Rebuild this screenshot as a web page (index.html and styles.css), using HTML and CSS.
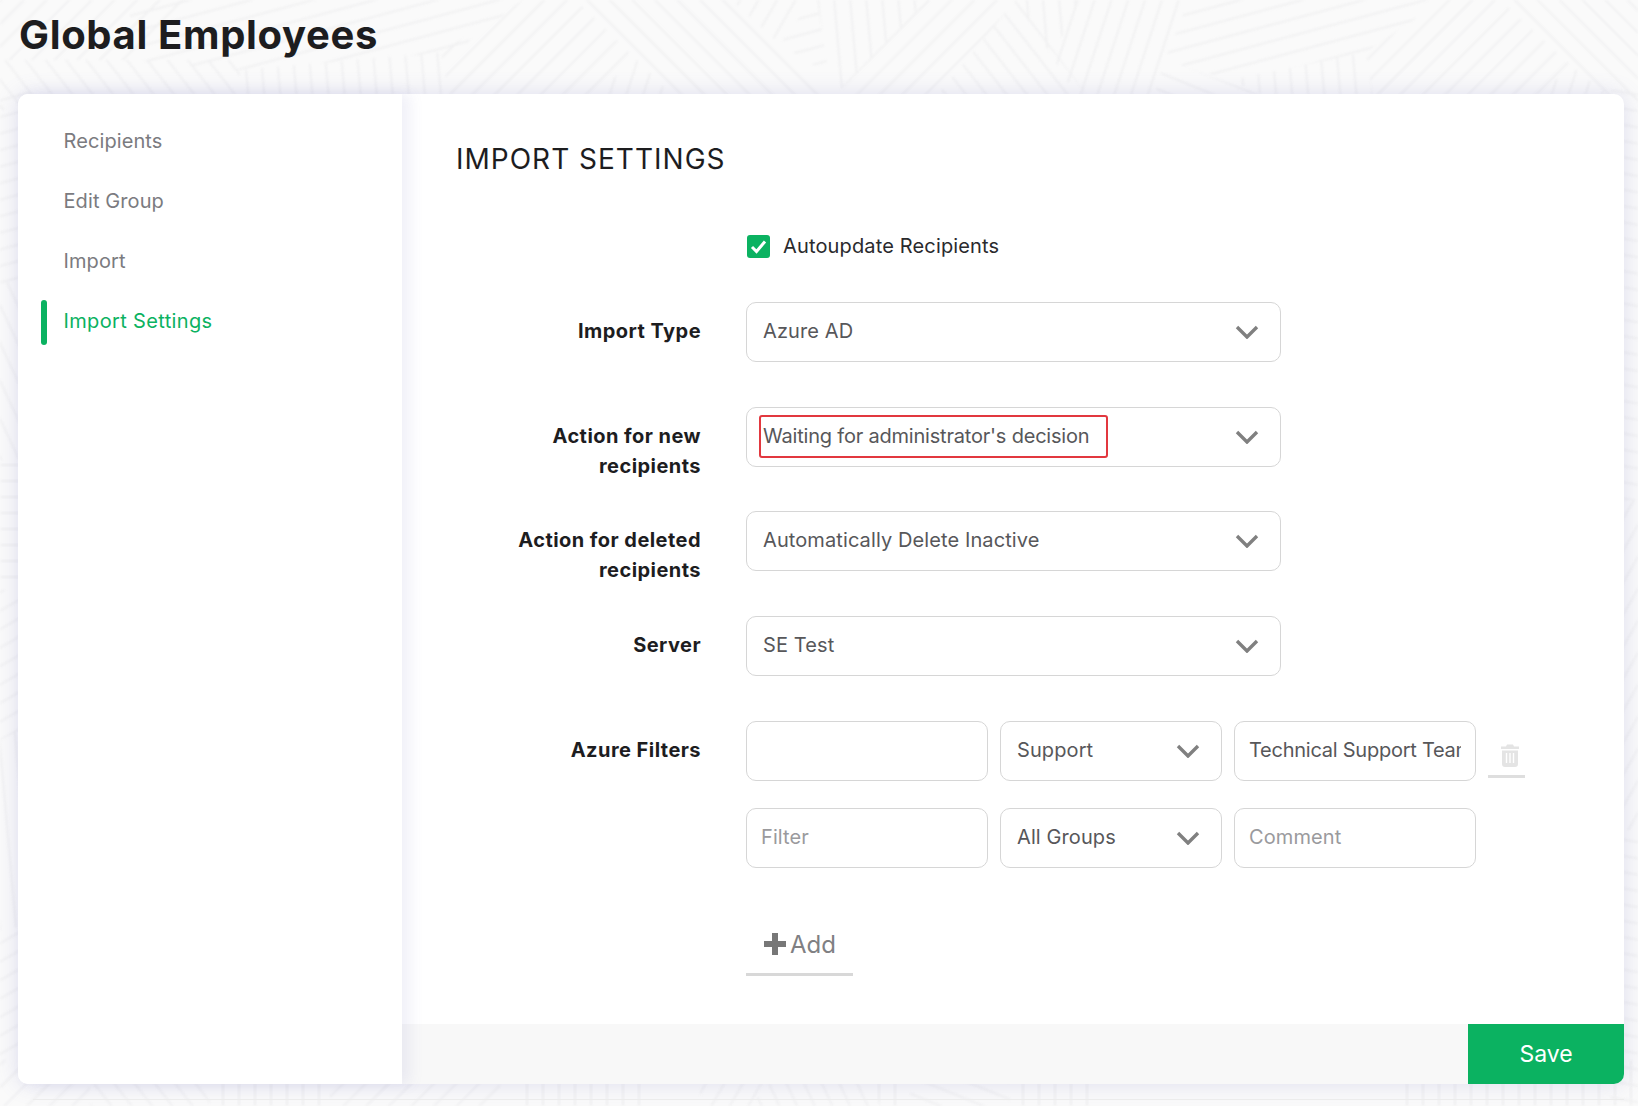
FILE: index.html
```html
<!DOCTYPE html>
<html lang="en">
<head>
<meta charset="utf-8">
<title>Global Employees</title>
<link rel="stylesheet" href="styles.css">
</head>
<body>
<svg class="backdrop" width="1638" height="1106" viewBox="0 0 1638 1106" aria-hidden="true">
  <defs>
    <pattern id="a0" width="16" height="16" patternUnits="userSpaceOnUse"><rect width="16" height="2" fill="#eeeeef"/></pattern>
    <pattern id="r15" width="16" height="16" patternUnits="userSpaceOnUse" patternTransform="rotate(-15)"><rect width="16" height="2" fill="#eeeeef"/></pattern>
    <pattern id="r30" width="16" height="16" patternUnits="userSpaceOnUse" patternTransform="rotate(-30)"><rect width="16" height="2" fill="#eeeeef"/></pattern>
    <pattern id="r45" width="16" height="16" patternUnits="userSpaceOnUse" patternTransform="rotate(-45)"><rect width="16" height="2" fill="#eeeeef"/></pattern>
    <pattern id="r60" width="16" height="16" patternUnits="userSpaceOnUse" patternTransform="rotate(-60)"><rect width="16" height="2" fill="#eeeeef"/></pattern>
    <pattern id="r72" width="16" height="16" patternUnits="userSpaceOnUse" patternTransform="rotate(-72)"><rect width="16" height="2" fill="#eeeeef"/></pattern>
    <pattern id="v85" width="16" height="16" patternUnits="userSpaceOnUse" patternTransform="rotate(85)"><rect width="16" height="2" fill="#eeeeef"/></pattern>
    <pattern id="v90" width="16" height="16" patternUnits="userSpaceOnUse" patternTransform="rotate(90)"><rect width="16" height="2" fill="#eeeeef"/></pattern>
    <pattern id="f10" width="16" height="16" patternUnits="userSpaceOnUse" patternTransform="rotate(10)"><rect width="16" height="2" fill="#eeeeef"/></pattern>
    <pattern id="f22" width="16" height="16" patternUnits="userSpaceOnUse" patternTransform="rotate(22)"><rect width="16" height="2" fill="#eeeeef"/></pattern>
    <pattern id="f45" width="16" height="16" patternUnits="userSpaceOnUse" patternTransform="rotate(45)"><rect width="16" height="2" fill="#eeeeef"/></pattern>
    <pattern id="f52" width="16" height="16" patternUnits="userSpaceOnUse" patternTransform="rotate(52)"><rect width="16" height="2" fill="#eeeeef"/></pattern>
    <pattern id="f65" width="16" height="16" patternUnits="userSpaceOnUse" patternTransform="rotate(65)"><rect width="16" height="2" fill="#eeeeef"/></pattern>
  </defs>
  <polygon fill="url(#r45)" points="0,0 200,0 130,60 0,60"/>
  <polygon fill="url(#f52)" points="0,60 130,60 240,60 240,110 0,110"/>
  <polygon fill="url(#r15)" points="130,0 523,0 455,52 240,70 130,60"/>
  <polygon fill="url(#v85)" points="240,70 441,52 452,110 240,110"/>
  <polygon fill="url(#r45)" points="441,52 523,0 576,0 635,58 580,110 452,110"/>
  <polygon fill="url(#f45)" points="576,0 731,0 841,110 687,110 635,58"/>
  <polygon fill="url(#r72)" points="635,58 687,110 580,110"/>
  <polygon fill="url(#r60)" points="731,0 812,0 780,44"/>
  <polygon fill="url(#r15)" points="812,0 817,0 829,75 780,44"/>
  <polygon fill="url(#v85)" points="817,0 927,0 841,88 829,75"/>
  <polygon fill="url(#r45)" points="927,0 1016,0 925,110 841,110 841,88"/>
  <polygon fill="url(#f52)" points="1016,0 1088,96 1085,110 925,110"/>
  <polygon fill="url(#v85)" points="1016,0 1077,0 1053,58"/>
  <polygon fill="url(#r72)" points="1077,0 1189,0 1150,110 1085,110 1053,58"/>
  <polygon fill="url(#r15)" points="1189,0 1443,0 1366,52 1230,80 1165,60"/>
  <polygon fill="url(#f22)" points="1165,60 1265,96 1265,110 1150,110"/>
  <polygon fill="url(#v85)" points="1230,80 1366,52 1375,110 1265,110 1265,96"/>
  <polygon fill="url(#r45)" points="1443,0 1500,0 1572,66 1520,110 1375,110 1366,52"/>
  <polygon fill="url(#f45)" points="1500,0 1638,0 1638,110 1625,110 1572,66"/>
  <polygon fill="url(#r72)" points="1572,66 1625,110 1520,110"/>

  <polygon fill="url(#r15)" points="0,90 30,90 30,275 0,285"/>
  <polygon fill="url(#f65)" points="0,285 30,275 30,460 0,460"/>
  <polygon fill="url(#a0)" points="0,460 30,460 30,590 0,590"/>
  <polygon fill="url(#r30)" points="0,590 30,590 30,725 0,740"/>
  <polygon fill="url(#v85)" points="0,740 30,725 30,925 0,930"/>
  <polygon fill="url(#r30)" points="0,930 30,925 30,1055 0,1060"/>

  <polygon fill="url(#f10)" points="1610,90 1638,90 1638,500 1610,500"/>
  <polygon fill="url(#r60)" points="1610,500 1638,500 1638,830 1610,830"/>
  <polygon fill="url(#f10)" points="1610,830 1638,830 1638,1106 1610,1106"/>

  <polygon fill="url(#r45)" points="0,1060 90,1060 90,1106 0,1106"/>
  <polygon fill="url(#f52)" points="90,1060 210,1060 210,1106 90,1106"/>
  <polygon fill="url(#v90)" points="210,1060 330,1060 330,1106 210,1106"/>
  <polygon fill="url(#r45)" points="330,1060 500,1060 500,1106 330,1106"/>
  <polygon fill="url(#v90)" points="520,1060 640,1060 640,1106 520,1106"/>
  <polygon fill="url(#r60)" points="700,1060 790,1060 750,1106 700,1106"/>
  <polygon fill="url(#f65)" points="790,1060 860,1060 880,1106 750,1106"/>
  <polygon fill="url(#v90)" points="860,1060 910,1060 910,1106 880,1106"/>
  <polygon fill="url(#f22)" points="910,1060 1010,1060 1010,1106 910,1106"/>
  <polygon fill="url(#v90)" points="1010,1060 1090,1060 1090,1106 1010,1106"/>
  <polygon fill="url(#v90)" points="1400,1060 1638,1060 1638,1106 1400,1106"/>
</svg>

<div class="page">
  <header class="page-head">
    <h1 class="page-title">Global Employees</h1>
  </header>

  <div class="card">
    <nav class="side">
      <a class="side-link">Recipients</a>
      <a class="side-link">Edit Group</a>
      <a class="side-link">Import</a>
      <a class="side-link side-link-active">Import Settings</a>
    </nav>

    <main class="main">
      <div class="content">
        <h2 class="section-title">IMPORT SETTINGS</h2>

        <div class="check-row">
          <span class="check">
            <svg width="23" height="23" viewBox="0 0 23 23"><path d="M5 12l4.500 4.500 8.500-10" fill="none" stroke="#fff" stroke-width="3"/></svg>
          </span>
          <span class="check-label">Autoupdate Recipients</span>
        </div>

        <div class="row">
          <div class="row-label">Import Type</div>
          <div class="select select-wide"><span>Azure AD</span>
            <svg class="chev" width="24" height="14" viewBox="0 0 24 14"><path d="M2 2l10 10 10-10" fill="none" stroke="#808080" stroke-width="3.400"/></svg>
          </div>
        </div>

        <div class="row">
          <div class="row-label">Action for new recipients</div>
          <div class="select select-wide select-tight"><span>Waiting for administrator's decision</span>
            <span class="highlight"></span>
            <svg class="chev" width="24" height="14" viewBox="0 0 24 14"><path d="M2 2l10 10 10-10" fill="none" stroke="#808080" stroke-width="3.400"/></svg>
          </div>
        </div>

        <div class="row">
          <div class="row-label">Action for deleted recipients</div>
          <div class="select select-wide"><span>Automatically Delete Inactive</span>
            <svg class="chev" width="24" height="14" viewBox="0 0 24 14"><path d="M2 2l10 10 10-10" fill="none" stroke="#808080" stroke-width="3.400"/></svg>
          </div>
        </div>

        <div class="row">
          <div class="row-label">Server</div>
          <div class="select select-wide"><span>SE Test</span>
            <svg class="chev" width="24" height="14" viewBox="0 0 24 14"><path d="M2 2l10 10 10-10" fill="none" stroke="#808080" stroke-width="3.400"/></svg>
          </div>
        </div>

        <div class="row row-filters">
          <div class="row-label">Azure Filters</div>
          <div class="filters">
            <div class="filter-line">
              <input class="field" type="text" value="">
              <div class="select select-mid"><span>Support</span>
                <svg class="chev" width="24" height="14" viewBox="0 0 24 14"><path d="M2 2l10 10 10-10" fill="none" stroke="#808080" stroke-width="3.400"/></svg>
              </div>
              <input class="field field-tight" type="text" value="Technical Support Team">
              <button class="trash" type="button" aria-label="Delete">
                <svg width="18" height="24" viewBox="0 0 18 24"><path d="M6 1.500h6l1 2h5v2.500H0V3.500h5zM1 7.500h16v13.500a3 3 0 0 1-3 3H4a3 3 0 0 1-3-3z" fill="#e4e4e4"/><path d="M5.500 10v10M9 10v10M12.500 10v10" stroke="#fff" stroke-width="1.400"/></svg>
              </button>
            </div>
            <div class="filter-line">
              <input class="field" type="text" placeholder="Filter">
              <div class="select select-mid"><span>All Groups</span>
                <svg class="chev" width="24" height="14" viewBox="0 0 24 14"><path d="M2 2l10 10 10-10" fill="none" stroke="#808080" stroke-width="3.400"/></svg>
              </div>
              <input class="field" type="text" placeholder="Comment">
            </div>
            <button class="add" type="button">
              <svg width="22" height="22" viewBox="0 0 22 22"><path d="M8 0h6v8h8v6h-8v8H8v-8H0V8h8z" fill="#777"/></svg>
              <span>Add</span>
            </button>
          </div>
        </div>
      </div>

      <footer class="card-foot">
        <button class="save" type="button">Save</button>
      </footer>
    </main>
  </div>

  <div class="page-rule"></div>
</div>
</body>
</html>
```

FILE: styles.css
```css
* { box-sizing: border-box; }

html, body {
  margin: 0;
  height: 1106px;
  overflow: hidden;
  background: #fafafa;
}

body {
  font-family: Inter, "Noto Sans", sans-serif;
  position: relative;
}

.backdrop {
  position: absolute;
  top: 0;
  left: 0;
  opacity: 0.75;
  filter: blur(0.8px);
}

.page {
  position: relative;
  display: flex;
  flex-direction: column;
}

.page-head {
  height: 94px;
  padding: 11px 0 0 19px;
}

.page-title {
  margin: 0;
  font-size: 40px;
  line-height: 48px;
  font-weight: 700;
  color: #1d1d1f;
  letter-spacing: 0.65px;
}

.card {
  display: flex;
  width: 1606px;
  height: 990px;
  margin-left: 18px;
  background: #fff;
  border-radius: 10px;
  box-shadow: 0 0 22px rgba(110, 110, 190, 0.2);
}

.side {
  position: relative;
  z-index: 1;
  flex: 0 0 384px;
  display: flex;
  flex-direction: column;
  padding-top: 17px;
  background: #fff;
  border-radius: 10px 0 0 10px;
  box-shadow: 8px 0 14px rgba(110, 110, 190, 0.1);
}

.side-link {
  position: relative;
  height: 60px;
  padding-left: 45.5px;
  font-size: 20px;
  line-height: 60px;
  letter-spacing: 0.1px;
  color: #7b7b7f;
}

.side-link-active {
  color: #0bb261;
  letter-spacing: 0.35px;
}

.side-link-active::before {
  content: "";
  position: absolute;
  left: 23px;
  top: 9px;
  width: 6px;
  height: 45px;
  border-radius: 3px;
  background: #0bb261;
}

.main {
  flex: 1;
  display: flex;
  flex-direction: column;
  min-width: 0;
  min-height: 0;
}

.content {
  flex: 1;
  min-height: 0;
  padding: 48px 55px 0;
}

.section-title {
  margin: 0 0 0 -1px;
  font-size: 28px;
  line-height: 34px;
  font-weight: 400;
  letter-spacing: 1px;
  color: #1d1d1f;
}

.check-row {
  display: flex;
  align-items: center;
  gap: 13px;
  height: 24px;
  margin: 58px 0 44px 290px;
}

.check {
  width: 23px;
  height: 23px;
  border-radius: 3px;
  background: #0bb261;
}

.check svg { display: block; }

.check-label {
  font-size: 20px;
  letter-spacing: 0.15px;
  color: #2a2a2d;
}

.row {
  display: flex;
  gap: 45px;
  height: 60px;
  margin-bottom: 44.67px;
}

.row-filters {
  height: auto;
  margin-bottom: 0;
}

.row-label {
  flex: 0 0 244px;
  padding-top: 14px;
  font-size: 20px;
  line-height: 30px;
  font-weight: 700;
  letter-spacing: 0.45px;
  color: #1d1d1f;
  text-align: right;
}

.select,
.field {
  height: 60px;
  border: 1.5px solid #d6d6d6;
  border-radius: 10px;
  background: #fff;
  font-family: inherit;
  font-size: 20px;
  letter-spacing: 0.1px;
  color: #57575a;
}

.select {
  position: relative;
  display: flex;
  align-items: center;
  justify-content: space-between;
  padding: 0 21px 2px 16px;
}

.select-wide { width: 535px; }
.select-mid { width: 222px; }
.select-tight { letter-spacing: -0.2px; }

.chev { flex: none; margin-top: 2px; }

.highlight {
  position: absolute;
  left: 12px;
  top: 7px;
  width: 349px;
  height: 43px;
  border: 2px solid #e2383f;
  border-radius: 3px;
}

.filters {
  display: flex;
  flex-direction: column;
  gap: 27px;
}

.filter-line {
  display: flex;
  gap: 12px;
}

.field {
  width: 242px;
  padding: 0 14px 2px;
  outline: none;
}

.field-tight { letter-spacing: -0.25px; }

.field::placeholder {
  color: #9a9a9d;
  opacity: 1;
}

.trash {
  width: 37px;
  height: 57px;
  padding: 14px 0 0 7px;
  border: 0;
  border-bottom: 3px solid #dedede;
  background: none;
}

.trash svg { display: block; margin: 0 auto; }

.add {
  display: flex;
  align-items: center;
  gap: 4px;
  width: 107px;
  height: 60px;
  margin-top: 21px;
  padding: 0 0 0 18px;
  border: 0;
  border-bottom: 3px solid #d8d8d8;
  background: none;
  font-family: inherit;
  font-size: 24px;
  color: #808083;
}

.card-foot {
  flex: none;
  display: flex;
  justify-content: flex-end;
  height: 60px;
  background: #f8f8f8;
  border-radius: 0 0 10px 0;
}

.save {
  width: 156px;
  border: 0;
  border-radius: 0 0 10px 0;
  background: #0bb261;
  color: #fff;
  font-family: inherit;
  font-size: 23px;
}

.page-rule {
  height: 1px;
  margin: 15px 14px 0 33px;
  background: #ececec;
}
```
